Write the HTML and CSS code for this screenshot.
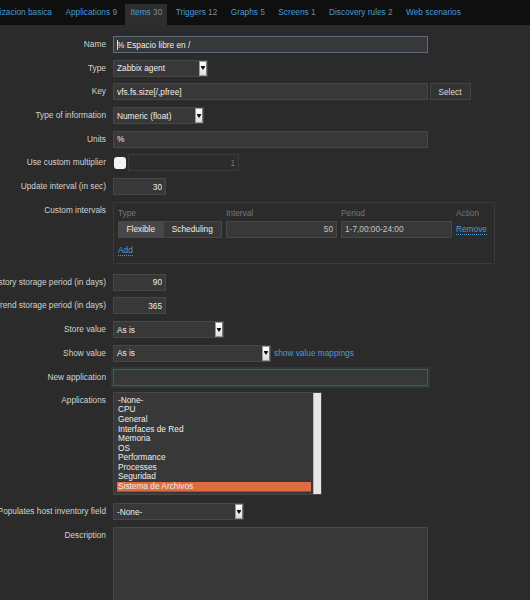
FILE: index.html
```html
<!DOCTYPE html>
<html>
  <head>
    <title>Items</title>
    <link rel="stylesheet" href="styles.css">
  </head>
  <body>
    <div class="nav">
      <span class="nav-host"><span>Template Monitorizacion basica</span></span>
      <a href="#">Applications <span class="count">9</span></a>
      <a href="#" class="active">Items <span class="count">30</span></a>
      <a href="#">Triggers <span class="count">12</span></a>
      <a href="#">Graphs <span class="count">5</span></a>
      <a href="#">Screens <span class="count">1</span></a>
      <a href="#">Discovery rules <span class="count">2</span></a>
      <a href="#">Web scenarios</a>
    </div>

    <form class="item-form">
      <div class="row">
        <label class="label" for="name">Name</label>
        <div class="field">
          <div class="input wide focused"><span class="caret"></span>% Espacio libre en /</div>
        </div>
      </div>

      <div class="row">
        <span class="label">Type</span>
        <div class="field">
          <div class="select" style="width: 95px"><span class="select-text">Zabbix agent</span><span class="select-arrow"></span></div>
        </div>
      </div>

      <div class="row">
        <label class="label" for="key">Key</label>
        <div class="field">
          <input class="input wide" id="key" type="text" value="vfs.fs.size[/,pfree]">
          <button type="button" class="btn">Select</button>
        </div>
      </div>

      <div class="row">
        <span class="label">Type of information</span>
        <div class="field">
          <div class="select" style="width: 91px"><span class="select-text">Numeric (float)</span><span class="select-arrow"></span></div>
        </div>
      </div>

      <div class="row">
        <label class="label" for="units">Units</label>
        <div class="field">
          <input class="input wide" id="units" type="text" value="%">
        </div>
      </div>

      <div class="row">
        <span class="label">Use custom multiplier</span>
        <div class="field">
          <input class="check" type="checkbox">
          <input class="input multiplier" type="text" value="1" disabled>
        </div>
      </div>

      <div class="row">
        <label class="label" for="delay">Update interval (in sec)</label>
        <div class="field">
          <input class="input short" id="delay" type="text" value="30">
        </div>
      </div>

      <div class="row row-intervals">
        <span class="label">Custom intervals</span>
        <div class="intervals">
          <div class="intervals-grid">
            <span class="th">Type</span>
            <span class="th">Interval</span>
            <span class="th">Period</span>
            <span class="th">Action</span>

            <div class="radio-group">
              <span class="radio on">Flexible</span>
              <span class="radio sched">Scheduling</span>
            </div>
            <input class="input interval" type="text" value="50">
            <input class="input period" type="text" value="1-7,00:00-24:00">
            <span><a href="#" class="link">Remove</a></span>
          </div>
          <div class="add-row"><a href="#" class="link">Add</a></div>
        </div>
      </div>

      <div class="row">
        <label class="label" for="history">History storage period (in days)</label>
        <div class="field">
          <input class="input short" id="history" type="text" value="90">
        </div>
      </div>

      <div class="row">
        <label class="label" for="trends">Trend storage period (in days)</label>
        <div class="field">
          <input class="input short" id="trends" type="text" value="365">
        </div>
      </div>

      <div class="row">
        <span class="label">Store value</span>
        <div class="field">
          <div class="select" style="width: 111px"><span class="select-text">As is</span><span class="select-arrow"></span></div>
        </div>
      </div>

      <div class="row">
        <span class="label">Show value</span>
        <div class="field">
          <div class="select" style="width: 158px"><span class="select-text">As is</span><span class="select-arrow"></span></div>
          <a href="#" class="plain-link">show value mappings</a>
        </div>
      </div>

      <div class="row">
        <label class="label" for="new-app">New application</label>
        <div class="field">
          <input class="input wide new-app" id="new-app" type="text">
        </div>
      </div>

      <div class="row row-apps">
        <span class="label">Applications</span>
        <div class="listbox">
          <div class="options">
            <div class="option">-None-</div>
            <div class="option">CPU</div>
            <div class="option">General</div>
            <div class="option">Interfaces de Red</div>
            <div class="option">Memoria</div>
            <div class="option">OS</div>
            <div class="option">Performance</div>
            <div class="option">Processes</div>
            <div class="option">Seguridad</div>
            <div class="option selected">Sistema de Archivos</div>
          </div>
          <div class="scrollbar"></div>
        </div>
      </div>

      <div class="row">
        <span class="label">Populates host inventory field</span>
        <div class="field">
          <div class="select" style="width: 131px"><span class="select-text">-None-</span><span class="select-arrow"></span></div>
        </div>
      </div>

      <div class="row">
        <label class="label" for="description">Description</label>
        <textarea class="textarea" id="description"></textarea>
      </div>
    </form>
  </body>
</html>
```

FILE: styles.css
```css
body {
  margin: 0;
  background-color: #2b2b2b;
  font-family: "Liberation Sans", Arial, sans-serif;
  font-size: 8.3px;
  color: #d2d2d2;
  overflow: hidden;
}

/* top navigation */
.nav {
  display: flex;
  gap: 3.4px;
  height: 25px;
  background-color: #0f0f0f;
}
.nav-host {
  flex: none;
  width: 57px;
  display: flex;
  justify-content: flex-end;
  overflow: hidden;
}
.nav-host span {
  padding: 6px 5px 0 0;
  line-height: 12px;
  white-space: nowrap;
  color: #4a9bd3;
}
.nav a {
  margin-top: 4px;
  padding: 2px 5px 7px;
  line-height: 12px;
  white-space: nowrap;
  color: #4a9bd3;
  text-decoration: none;
}
.nav a.active {
  background-color: #2e2e2e;
}
.count {
  color: #858585;
}

/* form rows */
.item-form {
  display: flex;
  flex-direction: column;
  gap: 6.7px;
  padding-top: 11px;
}
.row {
  display: flex;
  align-items: flex-start;
  gap: 7px;
}
.row-intervals {
  margin-bottom: 3.3px;
}
.row-apps {
  margin-bottom: 1.3px;
}
.label {
  flex: 0 0 106px;
  min-width: 0;
  width: 106px;
  display: flex;
  justify-content: flex-end;
  white-space: nowrap;
  line-height: 17px;
  color: #d2d2d2;
}
.field {
  display: flex;
  align-items: center;
  height: 17px;
}

/* controls */
.input {
  box-sizing: border-box;
  height: 17px;
  margin: 0;
  padding: 0 3px;
  border: 1px solid #474747;
  background-color: #383838;
  color: #eeeeee;
  font: inherit;
  outline: none;
}
div.input {
  display: flex;
  align-items: center;
}
.wide {
  width: 315px;
}
.short {
  width: 53px;
  text-align: right;
}
.focused {
  border-color: #5b6d7d;
}
.caret {
  width: 0;
  height: 10px;
  border-left: 1px solid #dddddd;
  margin-right: -1px;
}
.new-app {
  border-color: #41604a;
  box-shadow: 0 0 0 2px #2a3d2f;
}
.btn {
  box-sizing: border-box;
  height: 17px;
  width: 41px;
  margin-left: 1.5px;
  padding: 0;
  border: 1px solid #444444;
  background-color: #333333;
  color: #dddddd;
  font: inherit;
}
.check {
  appearance: none;
  width: 12px;
  height: 12px;
  margin: 0 2px 0 1px;
  border-radius: 3px;
  background-color: #f4f4f4;
}
.multiplier {
  width: 111px;
  text-align: right;
  background-color: #2c2c2c;
  border-color: #3b3b3b;
  color: #777777;
}

.select {
  box-sizing: border-box;
  height: 17px;
  display: flex;
  align-items: stretch;
  padding: 0 0 0 3px;
  border: 1px solid #474747;
  background-color: #383838;
  color: #eeeeee;
}
.select-text {
  flex: 1;
  display: flex;
  align-items: center;
}
.select-arrow {
  width: 6px;
  display: flex;
  flex-direction: column;
  align-items: center;
  justify-content: center;
  border: 1px solid #9a9a9a;
  border-right-color: #777777;
  background: linear-gradient(#ffffff, #dedede);
}
.select-arrow::before {
  content: "";
  width: 4px;
  height: 1px;
  background-color: #111111;
}
.select-arrow::after {
  content: "";
  width: 0;
  height: 0;
  border-left: 2px solid transparent;
  border-right: 2px solid transparent;
  border-top: 3px solid #111111;
}

.link {
  color: #4a9bd3;
  text-decoration: none;
  border-bottom: 1px dotted #4a9bd3;
}
.plain-link {
  margin-left: 3px;
  color: #4a9bd3;
  text-decoration: none;
}

/* custom intervals */
.intervals {
  box-sizing: border-box;
  width: 382px;
  padding: 3px 5px 7px 4px;
  border: 1px solid #3a3a3a;
}
.intervals-grid {
  display: grid;
  grid-template-columns: 104px 111px 111px auto;
  column-gap: 4px;
  row-gap: 1px;
  align-items: center;
}
.th {
  line-height: 14px;
  color: #777777;
}
.radio-group {
  display: flex;
}
.radio {
  box-sizing: border-box;
  height: 17px;
  line-height: 15px;
  width: 46px;
  text-align: center;
  border: 1px solid #474747;
  background-color: #484848;
  color: #eeeeee;
}
.radio.sched {
  width: 59px;
  border-left: none;
  background-color: #383838;
}
.interval {
  width: 111px;
  text-align: right;
  color: #c4c4c4;
}
.period {
  width: 111px;
  color: #c4c4c4;
}
.add-row {
  margin-top: 6px;
  line-height: 12px;
}

/* applications list */
.listbox {
  box-sizing: border-box;
  width: 209px;
  height: 103px;
  display: flex;
  border: 1px solid #474747;
  background-color: #383838;
}
.options {
  flex: 1;
  padding: 2.5px 2px 0 4px;
}
.option {
  line-height: 9.6px;
  color: #eeeeee;
}
.option.selected {
  margin-left: -1px;
  padding-left: 1px;
  background-color: #df6c41;
  box-shadow: inset 0 -1px 0 #a84c2c;
}
.scrollbar {
  width: 7px;
  background-color: #e6e6e6;
  border-left: 1px solid #b5b5b5;
}

.textarea {
  box-sizing: border-box;
  width: 315px;
  height: 90px;
  margin: 0;
  border: 1px solid #474747;
  background-color: #383838;
  color: #eeeeee;
  font: inherit;
  resize: none;
}
```
